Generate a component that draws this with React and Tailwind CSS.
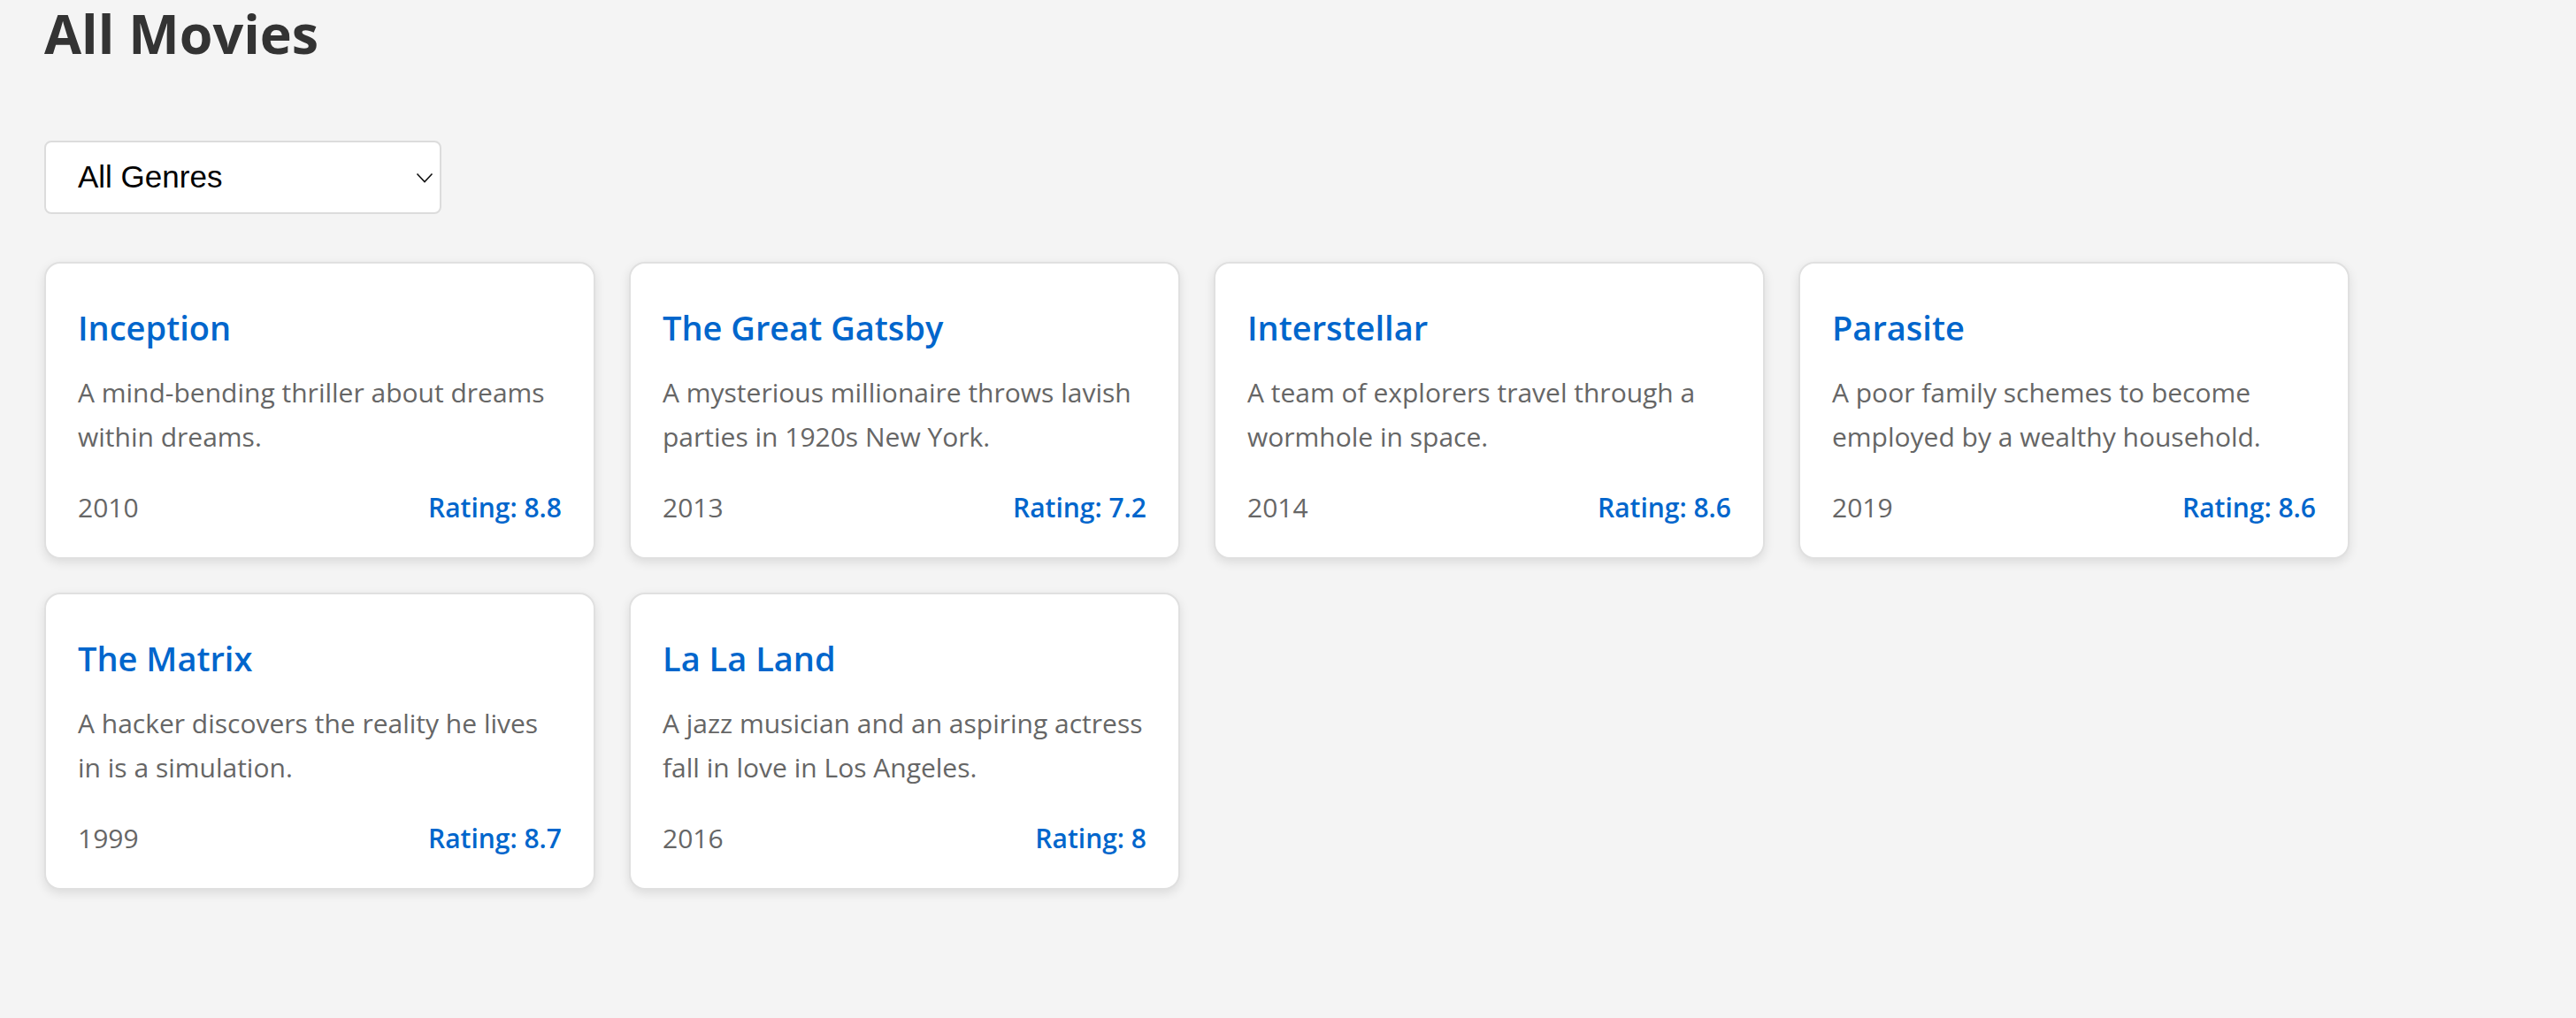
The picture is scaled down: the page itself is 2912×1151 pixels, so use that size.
const MOVIES = [
  { title: "Inception", description: "A mind-bending thriller about dreams within dreams.", year: 2010, rating: 8.8 },
  { title: "The Great Gatsby", description: "A mysterious millionaire throws lavish parties in 1920s New York.", year: 2013, rating: 7.2 },
  { title: "Interstellar", description: "A team of explorers travel through a wormhole in space.", year: 2014, rating: 8.6 },
  { title: "Parasite", description: "A poor family schemes to become employed by a wealthy household.", year: 2019, rating: 8.6 },
  { title: "The Matrix", description: "A hacker discovers the reality he lives in is a simulation.", year: 1999, rating: 8.7 },
  { title: "La La Land", description: "A jazz musician and an aspiring actress fall in love in Los Angeles.", year: 2016, rating: 8 },
];

const MovieCard = ({ movie }) => (
  <div className="flex h-full flex-col rounded-[18px] border-2 border-[#e0e0e0] bg-white px-[36px] pt-[46px] pb-[36px] shadow-[0_4px_12px_rgba(0,0,0,0.1)]">
    <h2 className="text-[38px] font-semibold leading-[52px] text-[#0066cc]">{movie.title}</h2>
    <p className="mt-[23px] text-[30px] leading-[50px] text-[#666]">{movie.description}</p>
    <div className="mt-auto flex items-center justify-between text-[30px] leading-[40px]">
      <span className="text-[#666]">{movie.year}</span>
      <span className="font-semibold text-[#0066cc]">Rating: {movie.rating}</span>
    </div>
  </div>
);

export default function App() {
  return (
    <div className="min-h-screen bg-[#f4f4f4] px-[50px] font-['Open_Sans',sans-serif]">
      <h1 className="text-[61px] font-bold leading-[76px] text-[#333]">All Movies</h1>

      <div className="relative mt-[83px] w-[449px]">
        <select className="h-[83px] w-full appearance-none rounded-[8px] border-2 border-[#dcdcdc] bg-white pl-[36px] font-['Liberation_Sans',sans-serif] text-[35px] text-black outline-none">
          <option>All Genres</option>
          <option>Action</option>
          <option>Drama</option>
          <option>Sci-Fi</option>
        </select>
        <svg
          className="pointer-events-none absolute right-[9px] top-1/2 -translate-y-1/2"
          width="20"
          height="12"
          viewBox="0 0 20 12"
          fill="none"
          stroke="#111"
          strokeWidth="1.6"
        >
          <path d="M1.5 1.5l8.5 9 8.5-9" />
        </svg>
      </div>

      <div className="mt-[54px] grid grid-cols-[repeat(4,623px)] gap-x-[38px] gap-y-[38px] pb-[40px]">
        {MOVIES.map((movie) => (
          <div key={movie.title} className="h-[336px]">
            <MovieCard movie={movie} />
          </div>
        ))}
      </div>
    </div>
  );
}
